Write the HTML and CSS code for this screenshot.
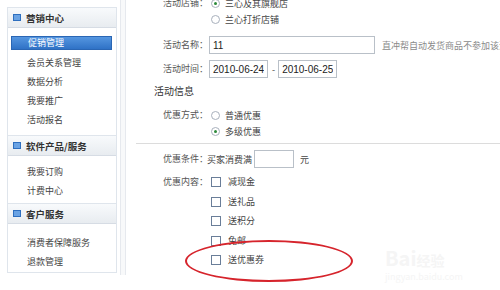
FILE: index.html
```html
<!DOCTYPE html>
<html lang="zh-CN">
<head>
<meta charset="UTF-8" />
<title>促销管理</title>
<link rel="stylesheet" href="styles.css">
</head>
<body>

<div class="layout">
  <aside class="sidebar">
    <div class="menu-head"><span class="sq"></span>营销中心</div>
    <ul class="menu first">
      <li class="active">促销管理</li>
      <li>会员关系管理</li>
      <li>数据分析</li>
      <li>我要推广</li>
      <li>活动报名</li>
    </ul>
    <div class="menu-head"><span class="sq"></span>软件产品/服务</div>
    <ul class="menu second">
      <li>我要订购</li>
      <li>计费中心</li>
    </ul>
    <div class="menu-head"><span class="sq"></span>客户服务</div>
    <ul class="menu third">
      <li>消费者保障服务</li>
      <li>退款管理</li>
    </ul>
  </aside>
  <div class="splitter"></div>

  <main class="content">
    <div class="row shop">
      <label>活动店铺：</label>
      <div class="opts">
        <div class="opt"><span class="radio on"></span>三心及其旗舰店</div>
        <div class="opt"><span class="radio"></span>兰心打折店铺</div>
      </div>
    </div>
    <div class="row field">
      <label>活动名称：</label>
      <input class="txt name" value="11">
      <span class="hint">直冲帮自动发货商品不参加该活动</span>
    </div>
    <div class="row field">
      <label>活动时间：</label>
      <input class="txt date" value="2010-06-24">
      <span class="dash">-</span>
      <input class="txt date" value="2010-06-25">
    </div>

    <h3>活动信息</h3>
    <div class="row way">
      <label>优惠方式：</label>
      <div class="opts">
        <div class="opt"><span class="radio"></span>普通优惠</div>
        <div class="opt"><span class="radio on"></span>多级优惠</div>
      </div>
    </div>
    <hr>
    <div class="row field cond">
      <label>优惠条件：</label>
      <span>买家消费满</span>
      <input class="txt money" value="">
      <span>元</span>
    </div>
    <div class="row gifts">
      <label>优惠内容：</label>
      <div class="opts checks">
        <div class="opt"><span class="box"></span>减现金</div>
        <div class="opt"><span class="box"></span>送礼品</div>
        <div class="opt"><span class="box"></span>送积分</div>
        <div class="opt"><span class="box"></span>免邮</div>
        <div class="opt"><span class="box"></span>送优惠券</div>
      </div>
    </div>
  </main>
</div>

<div class="circle"></div>
<div class="watermark">
  <div class="wm-logo">Bai<span>经验</span></div>
  <div class="wm-url">jingyan.baidu.com</div>
</div>

</body>
</html>
```

FILE: styles.css
```css
body {
  margin: 0;
  background: #fff;
  font-family: "Noto Sans CJK SC", "Liberation Sans", sans-serif;
  font-size: 9px;
  color: #444;
  overflow: hidden;
}
.layout {
  display: flex;
  height: 290px;
}

/* Sidebar */
.sidebar {
  flex-shrink: 0;
  margin: 7px 0 0 7px;
  width: 108px;
  height: 265px;
  border: 1px solid #dfe5ec;
  border-top: none;
  background: #fff;
}
.menu-head {
  display: flex;
  align-items: center;
  height: 19px;
  padding-left: 5px;
  font-weight: bold;
  font-size: 9.5px;
  color: #333;
  background: linear-gradient(#f8fafc, #e8ecf0);
  border-top: 1px solid #dfe5ec;
  border-bottom: 1px solid #d6dce4;
}
.sq {
  width: 6px;
  height: 5px;
  border: 1px solid #2e6fbf;
  background: #6aa3e4;
  margin-right: 5px;
}
.menu {
  list-style: none;
  margin: 0;
  padding: 6px 4px 6px 3px;
}
.menu.second { padding-top: 6px; padding-bottom: 3px; }
.menu.third { padding-top: 9px; }
.menu li {
  height: 19px;
  line-height: 19px;
  padding-left: 16px;
  white-space: nowrap;
}
.menu li.active {
  height: 12px;
  line-height: 12px;
  margin: 2px 0 3px;
  color: #fff;
  background: linear-gradient(#5596e0, #2f72c6);
  border: 1px solid #2a66b4;
}
.splitter {
  flex-shrink: 0;
  width: 4px;
  margin-left: 3px;
  height: 275px;
  border-left: 1px solid #e6e9ee;
  border-right: 1px solid #e6e9ee;
  background: #f8f9fa;
}

/* Main content */
.content {
  flex: 1;
  min-width: 0;
  overflow: hidden;
  margin-top: -5px;
}
.row {
  display: flex;
  align-items: flex-start;
  padding-left: 37px;
}
.row label {
  width: 44px;
  flex-shrink: 0;
  text-align: right;
  line-height: 16px;
  color: #555;
  white-space: nowrap;
}
.opts .opt {
  display: flex;
  align-items: center;
  height: 16px;
  white-space: nowrap;
}
.checks .opt {
  height: 19.5px;
  align-items: flex-start;
  line-height: 16px;
}
.radio {
  width: 7px;
  height: 7px;
  border: 1px solid #a8b0bc;
  border-radius: 50%;
  margin: 0 5px 0 4px;
  position: relative;
  background: #fff;
}
.radio.on::after {
  content: "";
  position: absolute;
  left: 2px;
  top: 2px;
  width: 3px;
  height: 3px;
  border-radius: 50%;
  background: #2d8a3a;
}
.box {
  width: 8px;
  height: 8px;
  border: 1px solid #6a7e99;
  margin: 3px 7px 0 4px;
}
.field {
  align-items: center;
}
.shop { margin-bottom: 9px; }
.field + .field { margin-top: 6px; }
.txt {
  flex-shrink: 0;
  box-sizing: border-box;
  height: 18px;
  margin-left: 2px;
  border: 1px solid #b9c0c8;
  font-family: "Liberation Sans", sans-serif;
  font-size: 10px;
  padding: 1px 3px 0;
  color: #222;
}
.name { width: 166px; }
.date { width: 59px; }
.money { width: 40px; margin: 0 6px 0 2px; }
.dash { margin: 0 1px 0 4px; }
.hint {
  margin-left: 7px;
  color: #8a8a8a;
  white-space: nowrap;
}
h3 {
  margin: 7px 0 10px 28px;
  font-size: 10px;
  line-height: 12px;
  font-weight: normal;
  color: #333;
}
hr {
  border: none;
  border-top: 1px solid #dcdcdc;
  margin: 4px 0 6px 10px;
}
.cond { margin-bottom: 6px; }

/* Overlays */
.circle {
  position: absolute;
  left: 185px;
  top: 240px;
  width: 164px;
  height: 38px;
  border: 2px solid #d6242c;
  border-radius: 50%;
}
.watermark {
  position: absolute;
  left: 385px;
  top: 248px;
  color: #f5f5f5;
}
.wm-logo {
  font-size: 20px;
  font-weight: bold;
  line-height: 20px;
}
.wm-logo span { font-size: 14px; }
.wm-url { font-size: 9px; }
```
